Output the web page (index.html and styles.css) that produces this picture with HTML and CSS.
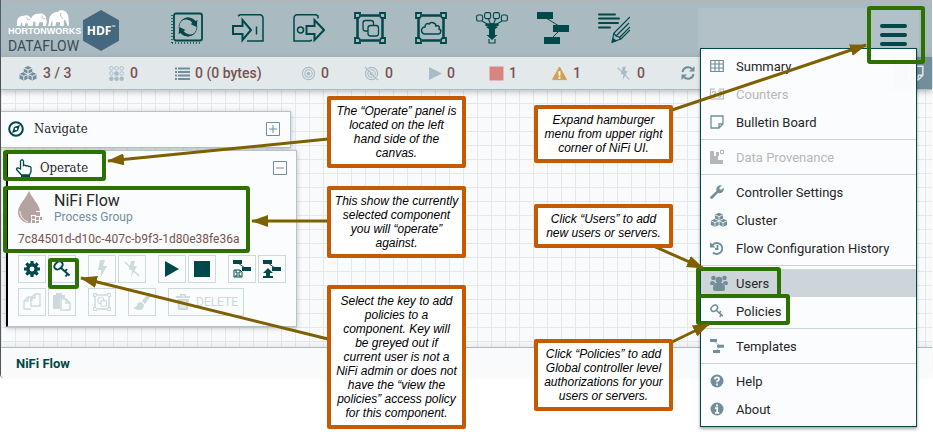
FILE: index.html
```html
<!DOCTYPE html>
<html lang="en">
<head>
<meta charset="utf-8">
<title>NiFi Flow</title>
<link rel="stylesheet" href="styles.css">
</head>
<body>
<svg class="defs" aria-hidden="true">
  <symbol id="cubes" viewBox="0 0 20 16">
    <path fill="currentColor" d="M10 0l4.500 2v4.500l4.500 2v5L14.500 15.500 10 13.500 5.500 15.500 1 13.500v-5l4.500-2V2z"/>
    <path fill="none" stroke="#eef2f4" d="M5.500 2.300L10 4.300l4.500-2M10 4.300v4M1.200 9l4.300 2 4.500-2 4.500 2 4.300-2M5.500 11v4M14.500 11v4M10 8.500v5M5.500 6.800l4.500 2 4.500-2"/>
  </symbol>
  <symbol id="key" viewBox="0 0 18 18">
    <g fill="none" stroke="currentColor" stroke-width="2"><ellipse cx="5.500" cy="5.500" rx="4.600" ry="3.400" transform="rotate(-40 5.500 5.500)"/><path d="M8 8l8.500 7.500M12 11.500l2-2.500M14.500 14l-2 2.500"/></g>
  </symbol>
  <symbol id="template" viewBox="0 0 32 32">
    <path fill="currentColor" d="M0 0h16v7H0zM16 13h16v7H16zM7 25h16v7H7z"/><path d="M9 6l13 8M22 19l-7 7" stroke="currentColor" fill="none"/>
  </symbol>
  <symbol id="note" viewBox="0 0 14 14">
    <path d="M1 1h12v8l-4 4H1zM13 9H9v4" fill="none" stroke="currentColor" stroke-width="1.300"/>
  </symbol>
  <symbol id="frame" viewBox="0 0 32 32">
    <path d="M7 3.500h18M7 28.500h18M3.500 7v18M28.500 7v18" stroke="currentColor" stroke-width="2.500"/>
    <path d="M1 1h5v3.500L4.500 6H1zM26 1h5v5h-3.500L26 4.500zM1 26h3.500L6 27.500V31H1zM27.500 26H31v5h-5v-3.500z" fill="none" stroke="currentColor" stroke-width="1.800"/>
  </symbol>
  <symbol id="bolt" viewBox="0 0 16 18"><path fill="currentColor" d="M6 0h5L9 6h4L6 18l1.500-8H4z"/></symbol>
  <symbol id="bolt-off" viewBox="0 0 16 18"><path fill="currentColor" d="M7 1h4L9.500 6H13L7 17l1-7H5z"/><path d="M1 2l14 14" stroke="currentColor" stroke-width="1.500"/></symbol>
  <symbol id="rings" viewBox="0 0 16 16"><g fill="none" stroke="currentColor" stroke-width="1.200"><circle cx="8" cy="8" r="6.500"/><circle cx="8" cy="8" r="4"/></g><circle cx="8" cy="8" r="2" fill="currentColor"/></symbol>
</svg>

<div class="app">
  <header class="header">
    <div class="brand">
      <div class="brand-words">
        <svg class="elephants" viewBox="0 0 56 18" aria-hidden="true">
          <g fill="#fff">
            <path d="M0 17c1-2 0-5 1-7 1-3 4-4 7-4 3-1 6 0 7 3l1 3-1 5h-3v-3H9v3H6v-3l-1-1-1 4z"/>
            <path d="M14 17c1-3 1-5 1-7 1-4 4-6 8-6 4-1 8 1 8 4l1 4-1 5h-3v-4h-4l-1 4h-3v-4l-2-1-1 5z"/>
            <path d="M33 17c2-3 1-6 2-9 1-4 5-6 9-6 1-2 5-2 7-1 3 2 4 5 4 8 0 3 1 5 0 8h-1c-1-3-2-6-3-7l-1 2v5h-4v-4h-4l-1 4h-3v-5l-1 0-1 5z"/>
          </g>
          <path d="M11 8c0 2 1 3 3 2M27 6c0 3 1 4 3 3M47 3c-1 3 0 5 2 6" fill="none" stroke="#a9bac1"/>
        </svg>
        <span class="brand-top">HORTONWORKS</span>
        <span class="brand-bottom">DATAFLOW</span>
      </div>
      <div class="hdf">HDF<small>™</small></div>
    </div>
    <nav class="tools" aria-label="Components">
      <button aria-label="Processor"><svg viewBox="0 0 32 32"><g fill="none" stroke="currentColor"><rect x="3" y="1.500" width="28" height="27" rx="2" stroke-width="1.800"/><path d="M1 3v28M1 31h30" stroke-width="1.500" stroke-dasharray="1 2"/><circle cx="17" cy="15" r="9" stroke-width=".700"/></g><path fill="currentColor" d="M9.500 9.500a9.500 9.500 0 0 1 15-.500l2-1-1 7-6-3 2-1a8 8 0 0 0-12-1.500zM24.500 20.500a9.500 9.500 0 0 1-15 .500l-2 1 1-7 6 3-2 1a8 8 0 0 0 12 1.500z"/></svg></button>
      <button aria-label="Input Port"><svg viewBox="0 0 32 32"><g fill="none" stroke="currentColor" stroke-width="2"><path d="M1 14h9.500V8L19 18l-8.500 10v-6H1z"/><path d="M6 4l2-1.200h20a3 3 0 0 1 3 3V29H15" stroke-width="1.500"/><path d="M24.500 14.500v8" stroke-width="1.500"/></g></svg></button>
      <button aria-label="Output Port"><svg viewBox="0 0 32 32"><g fill="none" stroke="currentColor" stroke-width="2"><path d="M13.500 14h8V8L31 18l-9.500 10v-6h-8z"/><path d="M25 6.500V4l-2-1.200H4a3 3 0 0 0-3 3V29h16l2-1" stroke-width="1.500"/><circle cx="7.500" cy="18" r="3" stroke-width="1.500"/></g></svg></button>
      <button aria-label="Process Group"><svg viewBox="0 0 32 32"><use href="#frame"/><g fill="#a9bac1" stroke="currentColor" stroke-width="1.300"><rect x="9" y="8.500" width="10.500" height="10.500" rx="2.500"/><rect x="14" y="13.500" width="10.500" height="10.500" rx="2.500"/></g></svg></button>
      <button aria-label="Remote Process Group"><svg viewBox="0 0 32 32"><use href="#frame"/><path d="M10 22a3.500 3.500 0 0 1 0-7c0-3 2-4 4-3 2-3 7-1 7 2 3-1 4 1 3 3 3 1 2 5-1 5z" fill="none" stroke="currentColor" stroke-width="1.500"/></svg></button>
      <button aria-label="Funnel"><svg viewBox="0 0 32 32"><g fill="none" stroke="currentColor" stroke-width="1.100"><rect x=".600" y="3" width="6" height="6" rx="1.500"/><rect x="8.600" y=".600" width="6" height="6" rx="1.500"/><rect x="17.400" y=".600" width="6" height="6" rx="1.500"/><rect x="25.400" y="3" width="6" height="6" rx="1.500"/><path d="M6 9l7 4M12.500 7l2 5M19.500 7l-2 5M26 9l-7 4M13 27v4h6v-4"/></g><ellipse cx="16" cy="13" rx="7" ry="2" fill="currentColor"/><path fill="currentColor" d="M10 15h12l-3 2v6h2.500L16 28l-5.500-5H13v-6z"/></svg></button>
      <button aria-label="Template"><svg viewBox="0 0 32 32"><use href="#template"/></svg></button>
      <button aria-label="Label"><svg viewBox="0 0 32 32"><path d="M1 2.500h16M1 6.500h20M1 11h19M1 15.500h11" stroke="currentColor" stroke-width="2" stroke-linecap="round"/><path d="M32 5L16 21l-2 9 9-3 9-9M18 24L31 11M21 26l11-11M16 21l2 3 3 1 2 2" fill="none" stroke="currentColor" stroke-width="1.200"/><path d="M14 31l1.500-5 3.500 3z" fill="currentColor"/></svg></button>
    </nav>
    <div class="menu-area"><button class="hamburger" aria-label="Global menu"><span></span><span></span><span></span></button></div>
  </header>

  <div class="status">
    <div class="stats">
      <span class="stat"><svg class="w20 strong"><use href="#cubes"/></svg>3 / 3</span>
      <span class="stat"><svg class="w17" viewBox="0 0 16 16"><g fill="none" stroke="currentColor"><circle cx="2.500" cy="2.500" r="1.900"/><circle cx="8" cy="2.500" r="1.900"/><circle cx="13.500" cy="2.500" r="1.900"/><circle cx="2.500" cy="8" r="1.900"/><circle cx="13.500" cy="8" r="1.900"/></g><g fill="currentColor"><circle cx="8" cy="8" r="2.500"/><circle cx="2.500" cy="13.500" r="2.400"/><circle cx="8" cy="13.500" r="2.400"/><circle cx="13.500" cy="13.500" r="2.400"/></g></svg>0</span>
      <span class="stat"><svg class="w15 strong" viewBox="0 0 15 14"><path d="M0 2h2M3 2h12M0 5.500h2M3 5.500h12M0 9h2M3 9h12M0 12.500h2M3 12.500h12" stroke="currentColor" stroke-width="2"/></svg>0 (0 bytes)</span>
      <span class="stat"><svg class="w15"><use href="#rings"/></svg>0</span>
      <span class="stat"><svg class="w17" viewBox="0 0 16 16"><use href="#rings"/><path d="M2 1l13 13" stroke="#e3e8eb" stroke-width="1.500"/><path d="M1 1l14 14" stroke="currentColor" stroke-width="1.300"/></svg>0</span>
      <span class="stat"><svg class="w13" viewBox="0 0 12 14"><path d="M0 1l12 6-12 6z" fill="currentColor"/></svg>0</span>
      <span class="stat"><svg class="w15 red" viewBox="0 0 14 14"><path d="M.500.500h13v13H.500z" fill="currentColor"/></svg>1</span>
      <span class="stat"><svg class="w17 amber" viewBox="0 0 16 16"><path d="M8 1l7.500 13.500H.500z" fill="currentColor" stroke="currentColor" stroke-linejoin="round"/><path d="M8 5.500v5M8 11.500v2" stroke="#fff" stroke-width="2"/></svg>1</span>
      <span class="stat"><svg class="w17"><use href="#bolt-off"/></svg>0</span>
      <button class="refresh" aria-label="Refresh"><svg viewBox="0 0 14 14"><path d="M1.500 6a5.500 5.500 0 0 1 9.500-3M12.500 8a5.500 5.500 0 0 1-9.500 3" fill="none" stroke="currentColor" stroke-width="2"/><path d="M13.500 0v5.500H8zM.500 14V8.500H6z" fill="currentColor"/></svg></button>
    </div>
    <button class="bulletins" aria-label="Bulletins"><svg><use href="#note"/></svg></button>
  </div>

  <main class="canvas">
    <section class="panel navigate">
      <svg class="compass" viewBox="0 0 16 16" aria-hidden="true"><circle cx="8" cy="8" r="6.800" fill="none" stroke="currentColor" stroke-width="2"/><path d="M12 4L10 10l-6 2 2-6z" fill="currentColor"/><circle cx="8" cy="8" r="1.300" fill="#f9fafb"/></svg>
      <h2>Navigate</h2>
      <button class="fold" aria-label="Expand"><svg viewBox="0 0 14 14"><path d="M.500.500h13v13H.500zM3 7h8M7 3v8" fill="none" stroke="currentColor"/></svg></button>
    </section>
    <section class="panel operate">
      <div class="panel-head">
        <svg class="hand" viewBox="0 0 18 20" aria-hidden="true"><path d="M5.500 11V3q1.500-2.500 3 0v4.500q1.500-1 2.500.500 1.500-1 2.500.500 2-.500 2.500 1v4L14.500 17h-8L1.500 11.500q0-2 2-1.500z" fill="none" stroke="currentColor" stroke-width="1.300"/><path d="M6 17h9v3H6z" fill="currentColor"/></svg>
        <h2>Operate</h2>
        <button class="fold" aria-label="Collapse"><svg viewBox="0 0 14 14"><path d="M.500.500h13v13H.500zM3 7h8" fill="none" stroke="currentColor"/></svg></button>
      </div>
      <div class="component">
        <svg class="drop" viewBox="0 0 24 33" aria-hidden="true"><path d="M11 0c2 6 11 14 11 21 0 6-5 11-11 11S0 27 0 21C0 14 9 6 11 0z" fill="#b5a3a2"/><path d="M2 20c0 5 3 9 8 11" fill="none" stroke="#f9fafb"/><path d="M13 24h5v-4h5v6h-2v6h-8z" fill="#f9fafb"/><path d="M14 25h3v3h-3zM18 21h4v4h-4zM18 26h3v3h-3zM14 29h3v3h-3zM18 30h3v2h-3zM22 26h2v3h-2z" fill="#b5a3a2"/></svg>
        <div><div class="name">NiFi Flow</div><div class="kind">Process Group</div></div>
      </div>
      <div class="uuid">7c84501d-d10c-407c-b9f3-1d80e38fe36a</div>
      <div class="actions">
        <div class="pair">
          <button aria-label="Configuration"><svg viewBox="0 0 18 18"><circle cx="9" cy="9" r="4.200" fill="none" stroke="currentColor" stroke-width="3.500"/><path d="M9 1v3M9 14v3M1 9h3M14 9h3M3.300 3.300l2 2M12.700 12.700l2 2M3.300 14.700l2-2M12.700 5.300l2-2" stroke="currentColor" stroke-width="3.200"/></svg></button>
          <button aria-label="Access Policies"><svg><use href="#key"/></svg></button>
        </div>
        <div class="pair">
          <button disabled aria-label="Enable"><svg><use href="#bolt"/></svg></button>
          <button disabled aria-label="Disable"><svg><use href="#bolt-off"/></svg></button>
        </div>
        <div class="pair">
          <button aria-label="Start"><svg viewBox="0 0 18 18"><path d="M2 1l14 8-14 8z" fill="currentColor"/></svg></button>
          <button aria-label="Stop"><svg viewBox="0 0 18 18"><path d="M1 1h16v16H1z" fill="currentColor"/></svg></button>
        </div>
        <div class="pair">
          <button aria-label="Create Template"><svg viewBox="0 0 18 18"><path d="M0 0h9v4H0zM9 7h9v4H9z" fill="currentColor"/><path d="M5 3l7 5M1 10h6l2 2v5H1zM3 10v3h4v-3M3 17v-2h4v2" fill="none" stroke="currentColor"/></svg></button>
          <button aria-label="Upload Template"><svg viewBox="0 0 18 18"><path d="M0 0h9v4H0zM9 7h9v4H9zM5 8l5 5H7v3H3v-3H0zM0 16h10v2H0z" fill="currentColor"/><path d="M5 3l7 5" stroke="currentColor"/></svg></button>
        </div>
      </div>
      <div class="actions second">
        <div class="pair">
          <button disabled aria-label="Copy"><svg viewBox="0 0 18 18"><path d="M5 4h4v4M5 4L1 8v8h7M1 8h4V4M12 1h5v12H8V5zM12 1v4H8" fill="none" stroke="currentColor" stroke-width="1.300"/></svg></button>
          <button disabled aria-label="Paste"><svg viewBox="0 0 18 18"><path d="M0 2h3V0h6v2h3v3H7v11H0z" fill="currentColor"/><path d="M8 6h5l4 4v7H8zM13 6v4h4" fill="none" stroke="currentColor" stroke-width="1.500"/></svg></button>
        </div>
        <button disabled aria-label="Group"><svg viewBox="0 0 32 32"><use href="#frame"/><g fill="#fbfcfd" stroke="currentColor" stroke-width="2"><rect x="9" y="8.500" width="10" height="10" rx="2"/><rect x="14" y="13.500" width="10" height="10" rx="2"/></g></svg></button>
        <button disabled aria-label="Fill Color"><svg viewBox="0 0 18 18"><path d="M17 0q2 1 0 4l-5 7-3-3 5-6q2-2 3-2zM8 9l3 3q0 5-5 5-4 0-6-3 3 1 4-2 1-3 4-3z" fill="currentColor"/></svg></button>
        <button disabled class="delete"><svg viewBox="0 0 18 18"><path d="M2 3h4V1h6v2h4v2H2zM3 6h12l-1 11H4z" fill="currentColor"/><path d="M7 8v7M9 8v7M11 8v7M7.500 3h3" stroke="#fbfcfd"/></svg>DELETE</button>
      </div>
    </section>
  </main>
  <footer class="crumbs"><a href="#">NiFi Flow</a></footer>

  <nav class="menu" aria-label="Global menu">
    <a href="#"><svg viewBox="0 0 14 14"><path d="M.700 1.500h12.600v11H.700zM.700 5h12.600M.700 9h12.600M5 1.500v11M9 1.500v11" fill="none" stroke="currentColor" stroke-width="1.200"/></svg>Summary</a>
    <a href="#" class="off"><svg viewBox="0 0 14 14"><path d="M5 2H.500v10h13V2H9M2.500 6q0-2 1.500-2t1.500 1.500L2.500 10h3M8 4h3L9.500 6.500Q12 7 11 9T8 9.500" fill="none" stroke="currentColor" stroke-width="1.200"/></svg>Counters</a>
    <a href="#"><svg><use href="#note"/></svg>Bulletin Board</a>
    <hr>
    <a href="#" class="off"><svg viewBox="0 0 14 14"><path d="M0 1h4v5h4v4h5v4H0z" fill="currentColor"/><path d="M6 2h3v4H6z" fill="currentColor"/><path d="M10.500.500h3v3h-3z" fill="none" stroke="currentColor"/></svg>Data Provenance</a>
    <hr>
    <a href="#"><svg viewBox="0 0 14 14"><path d="M0 12L6.500 6Q5.500 2 9 .500q1.500-.700 3 0L9.500 2.500v2H12l1.500-2Q14.500 6 12 7.500q-2 1-4 .500L2 14Q0 14 0 12z" fill="currentColor"/></svg>Controller Settings</a>
    <a href="#"><svg class="wide"><use href="#cubes"/></svg>Cluster</a>
    <a href="#"><svg viewBox="0 0 14 14"><path d="M2.500 4A5.500 5.500 0 1 1 3 11.500M7.500 4v4H5" fill="none" stroke="currentColor" stroke-width="1.800"/><path d="M0 1v5.500h5.500z" fill="currentColor"/></svg>Flow Configuration History</a>
    <hr>
    <a href="#" class="current"><svg class="wide" viewBox="0 0 18 16"><g fill="currentColor"><circle cx="3.500" cy="3" r="2.300"/><circle cx="14.500" cy="3" r="2.300"/><circle cx="9" cy="5" r="3.300"/><path d="M0 9q0-3 2-3l3 1-1 3H1zM18 9q0-3-2-3l-3 1 1 3h3zM3 14q0-6 3-6h6q3 0 3 6 0 2-2 2H5q-2 0-2-2z"/></g></svg>Users</a>
    <a href="#"><svg><use href="#key"/></svg>Policies</a>
    <hr>
    <a href="#"><svg><use href="#template"/></svg>Templates</a>
    <hr>
    <a href="#"><svg viewBox="0 0 14 14"><circle cx="7" cy="7" r="6.500" fill="currentColor"/><path d="M4.800 5.300q.200-2 2.200-2t2.200 1.700Q9.200 6.500 7 7.300v1M7 9.500v2" fill="none" stroke="#fbfcfd" stroke-width="1.700"/></svg>Help</a>
    <a href="#"><svg viewBox="0 0 14 14"><circle cx="7" cy="7" r="6.500" fill="currentColor"/><path d="M7 2.500v2M5 6.200h2.200v4.500M5 10.800h4.200" fill="none" stroke="#fbfcfd" stroke-width="1.800"/></svg>About</a>
  </nav>
</div>

<div class="notes">
  <div class="mark mark-hamburger"></div>
  <div class="mark mark-operate"></div>
  <div class="mark mark-component"></div>
  <div class="mark mark-key"></div>
  <div class="mark mark-users"></div>
  <div class="mark mark-policies"></div>
  <svg class="arrows" viewBox="0 0 933 441" aria-hidden="true">
    <defs><marker id="head" markerUnits="userSpaceOnUse" markerWidth="17" markerHeight="12" refX="16" refY="6" orient="auto"><path d="M0 0l17 6-17 6z" fill="#7f6000"/></marker></defs>
    <g stroke="#7f6000" stroke-width="3">
      <path d="M328 139L108 161" marker-end="url(#head)"/>
      <path d="M328 221H252" marker-end="url(#head)"/>
      <path d="M328 339L81 278" marker-end="url(#head)"/>
      <path d="M672 110L866 45" marker-end="url(#head)"/>
      <path d="M651 245L703 268" marker-end="url(#head)"/>
      <path d="M672 342L709 324" marker-end="url(#head)"/>
    </g>
  </svg>
  <p class="callout c-operate">The “Operate” panel is<br>located on the left<br>hand side of the<br>canvas.</p>
  <p class="callout c-component">This show the currently<br>selected component<br>you will “operate”<br>against.</p>
  <p class="callout c-key">Select the key to add<br>policies to a<br>component. Key will<br>be greyed out if<br>current user is not a<br>NiFi admin or does not<br>have the “view the<br>policies” access policy<br>for this component.</p>
  <p class="callout c-menu">Expand hamburger<br>menu from upper right<br>corner of NiFi UI.</p>
  <p class="callout c-users">Click “Users” to add<br>new users or servers.</p>
  <p class="callout c-policies">Click “Policies” to add<br>Global controller level<br>authorizations for your<br>users or servers.</p>
</div>
</body>
</html>
```
FILE: styles.css
```css
* { box-sizing: border-box; }
body {
  margin: 0;
  position: relative;
  min-height: 100vh;
  background: #fff;
  color: #262626;
  font-family: Roboto, "Liberation Sans", sans-serif;
  font-size: 13px;
}
button {
  margin: 0;
  padding: 0;
  border: 0;
  background: none;
  color: inherit;
  font: inherit;
}
a { color: inherit; text-decoration: none; }
svg { display: block; flex: none; }
.defs { position: absolute; width: 0; height: 0; }

.app {
  position: relative;
  margin-right: 1px;
  border-left: 1px solid #555a63;
  border-radius: 0 0 4px 4px;
}

/* Header */
.header {
  display: flex;
  height: 57px;
  border-top: 1px solid #b5b3b8;
  background: #a9bac1;
  color: #004849;
}
.brand {
  display: flex;
  gap: 7px;
  width: 155px;
  padding: 9px 0 0 7px;
}
.brand-words {
  display: flex;
  flex-direction: column;
  width: 68px;
  white-space: nowrap;
}
.elephants { width: 56px; height: 17px; margin-left: 7px; }
.brand-top {
  color: #fff;
  font: bold 9px/8px "Liberation Sans", sans-serif;
}
.brand-bottom {
  margin-top: 4px;
  color: #3c4a52;
  font: 14px/14px Roboto, sans-serif;
}
.hdf {
  display: flex;
  align-items: center;
  justify-content: center;
  width: 36px;
  height: 41px;
  background: #44687d;
  clip-path: polygon(50% 0, 100% 25%, 100% 75%, 50% 100%, 0 75%, 0 25%);
  color: #fff;
  font: bold 12px/14px "Open Sans", sans-serif;
}
.hdf small { align-self: flex-start; margin-top: 10px; font-size: 5px; }
.tools { display: flex; flex: 1; }
.tools button {
  display: flex;
  justify-content: center;
  width: 61px;
  padding-top: 11px;
}
.tools svg { width: 32px; height: 32px; }
.menu-area {
  display: flex;
  justify-content: flex-end;
  width: 221px;
  margin: 7px 13px 0 0;
  background: #b2c0c7;
}
.hamburger {
  display: flex;
  flex-direction: column;
  gap: 5px;
  width: 51px;
  padding: 16px 12px 0;
}
.hamburger span { height: 4px; border-radius: 2px; background: #004849; }

/* Status bar */
.status {
  position: relative;
  z-index: 1;
  display: flex;
  justify-content: space-between;
  height: 33px;
  border-bottom: 1px solid #aabbc3;
  background: #e3e8eb;
  box-shadow: 0 2px 6px rgba(0, 0, 0, .25);
}
.stats {
  display: grid;
  grid-template-columns: 90px 67px 126px 62px 66px 60px 62px 64px 66px 14px;
  align-items: center;
  padding-left: 17px;
  color: #775351;
  font-size: 14px;
  font-weight: 500;
}
.stat { display: flex; align-items: center; gap: 5px; }
.stat svg { height: 15px; color: #a9bbc6; }
.stat .strong, .refresh { color: #728e9b; }
.stat .red { color: #d88582; }
.stat .amber { color: #d1a053; }
.w13 { width: 13px; }
.w15 { width: 15px; }
.w17 { width: 17px; }
.w20 { width: 20px; }
.refresh svg { width: 14px; height: 14px; }
.bulletins { width: 39px; padding-left: 15px; background: #728e9b; color: #e3e8eb; }
.bulletins svg { width: 16px; height: 16px; }

/* Canvas and its panels */
.canvas {
  height: 257px;
  padding-top: 21px;
  background-color: #f9fafb;
  background-image:
    linear-gradient(90deg, #e5e8ea 1px, transparent 1px),
    linear-gradient(transparent 13px, #e5e8ea 13px);
  background-size: 14px 14px;
}
.panel {
  width: 290px;
  border: 1px solid #b3c3ca;
  background: rgba(251, 252, 253, .97);
  box-shadow: 0 1px 5px rgba(0, 0, 0, .25);
}
.panel h2 {
  flex: 1;
  margin: 0;
  font: 13px/16px "DejaVu Serif Condensed", "DejaVu Serif", serif;
}
.navigate {
  display: flex;
  align-items: center;
  gap: 10px;
  height: 37px;
  padding: 0 10px 2px 7px;
  border-left: 0;
}
.compass { width: 16px; height: 16px; color: #004849; }
.fold { color: #728e9b; }
.fold svg { width: 14px; height: 14px; }
.operate {
  width: 291px;
  height: 177px;
  margin: 2px 0 0 5px;
  border-left: 2px solid #000;
  padding: 0 9px 0 10px;
}
.panel-head {
  display: flex;
  align-items: center;
  gap: 7px;
  height: 34px;
  margin-left: -3px;
}
.hand { width: 18px; height: 20px; color: #004849; }
.component { display: flex; gap: 12px; margin-top: 6px; }
.drop { width: 24px; height: 33px; }
.name { font-size: 16px; line-height: 19px; }
.kind { color: #728e9b; font-size: 12px; line-height: 14px; }
.uuid { margin-top: 8px; color: #775351; font-size: 12px; line-height: 14px; }
.actions { display: flex; gap: 12px; margin-top: 9px; color: #004849; }
.actions.second { margin-top: 5px; }
.pair { display: flex; gap: 2px; }
.actions button {
  display: flex;
  align-items: center;
  justify-content: center;
  width: 28px;
  height: 28px;
  border: 1px solid #ccdadb;
}
.actions button:disabled { color: #ccdadb; }
.actions svg { width: 18px; height: 18px; }
.actions .delete { gap: 4px; width: 76px; font-size: 12px; }

.crumbs {
  height: 31px;
  padding: 8px 15px;
  border-top: 1px solid #a9bac1;
  border-radius: 0 0 4px 4px;
  background: #f8fafb;
  box-shadow: 0 -2px 6px rgba(0, 0, 0, .08);
  color: #004849;
  font-weight: 700;
  line-height: 16px;
}

/* Drop-down menu */
.menu {
  position: absolute;
  z-index: 2;
  top: 48px;
  right: 15px;
  width: 217px;
  padding: 3px 0;
  border: 1px solid #004849;
  background: rgba(251, 252, 253, .98);
  box-shadow: 0 2px 3px rgba(0, 0, 0, .35);
}
.menu a {
  display: flex;
  align-items: center;
  height: 28px;
  padding-left: 9px;
}
.menu svg { width: 14px; height: 14px; margin-right: 12px; color: #728e9b; }
.menu .wide { width: 18px; height: 16px; margin-right: 8px; }
.menu .off, .menu .off svg { color: #b4b8ba; }
.menu .current { background: #ced5da; }
.menu hr { height: 1px; margin: 3px 0; border: 0; background: #c9d3d8; }

/* Annotations laid over the interface */
.notes { position: absolute; z-index: 3; top: 0; left: 0; pointer-events: none; }
.arrows { position: absolute; top: 0; left: 0; width: 933px; height: 441px; }
.mark {
  position: absolute;
  border: 4px solid #2d7200;
  border-radius: 3px;
}
.mark-hamburger { left: 867px; top: 6px; width: 58px; height: 58px; }
.mark-operate { left: 3px; top: 150px; width: 103px; height: 31px; }
.mark-component { left: 3px; top: 186px; width: 247px; height: 67px; }
.mark-key { left: 48px; top: 258px; width: 31px; height: 31px; }
.mark-users { left: 696px; top: 267px; width: 85px; height: 31px; }
.mark-policies { left: 696px; top: 294px; width: 94px; height: 31px; }
.callout {
  position: absolute;
  display: grid;
  place-content: center;
  width: 139px;
  margin: 0;
  padding: 4px 0;
  border: 4px solid #c65a00;
  border-radius: 2px;
  background: #fff;
  color: #000;
  font: italic 12px/14px "Liberation Sans", sans-serif;
  text-align: center;
  white-space: nowrap;
}
.c-operate { left: 327px; top: 96px; }
.c-component { left: 327px; top: 186px; }
.c-key { left: 327px; top: 285px; height: 144px; }
.c-menu { left: 534px; top: 105px; }
.c-users { left: 534px; top: 204px; }
.c-policies { left: 534px; top: 339px; }
```
